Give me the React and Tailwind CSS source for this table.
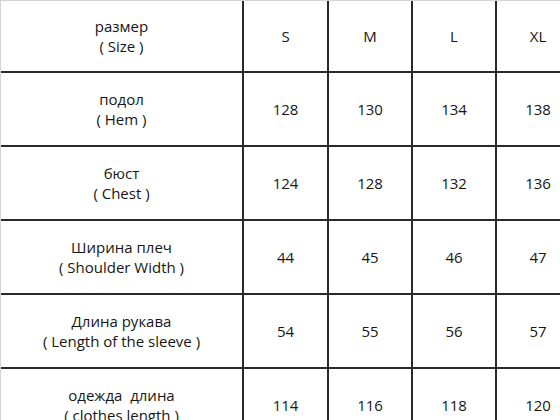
import React from 'react';

const rows = [
  { ru: 'размер', en: '( Size )', vals: ['S', 'M', 'L', 'XL'] },
  { ru: 'подол', en: '( Hem )', vals: ['128', '130', '134', '138'] },
  { ru: 'бюст', en: '( Chest )', vals: ['124', '128', '132', '136'] },
  { ru: 'Ширина плеч', en: '( Shoulder Width )', vals: ['44', '45', '46', '47'] },
  { ru: 'Длина рукава', en: '( Length of the sleeve )', vals: ['54', '55', '56', '57'] },
  { ru: 'одежда  длина', en: '( clothes length )', vals: ['114', '116', '118', '120'] },
];

const App = () => {
  return (
    <div className="w-[560px] h-[420px] overflow-hidden bg-white">
      <div
        className="grid grid-cols-[241px_83px_82px_82px_82px] grid-rows-[70px_72px_72px_72px_72px_72px] gap-[2px] bg-[#2a2a2a] border-t border-l border-[#d4d4d4] w-max text-[15px] text-[#161616] leading-[20px]"
        style={{ fontFamily: '"Segoe UI", "Open Sans", "Noto Sans", sans-serif' }}
      >
        {rows.map((row, i) => (
          <React.Fragment key={i}>
            <div className="bg-white flex flex-col items-center justify-center whitespace-pre">
              <span>{row.ru}</span>
              <span>{row.en}</span>
            </div>
            {row.vals.map((v, j) => (
              <div key={j} className="bg-white flex items-center justify-center">
                {v}
              </div>
            ))}
          </React.Fragment>
        ))}
      </div>
    </div>
  );
};

export default App;
